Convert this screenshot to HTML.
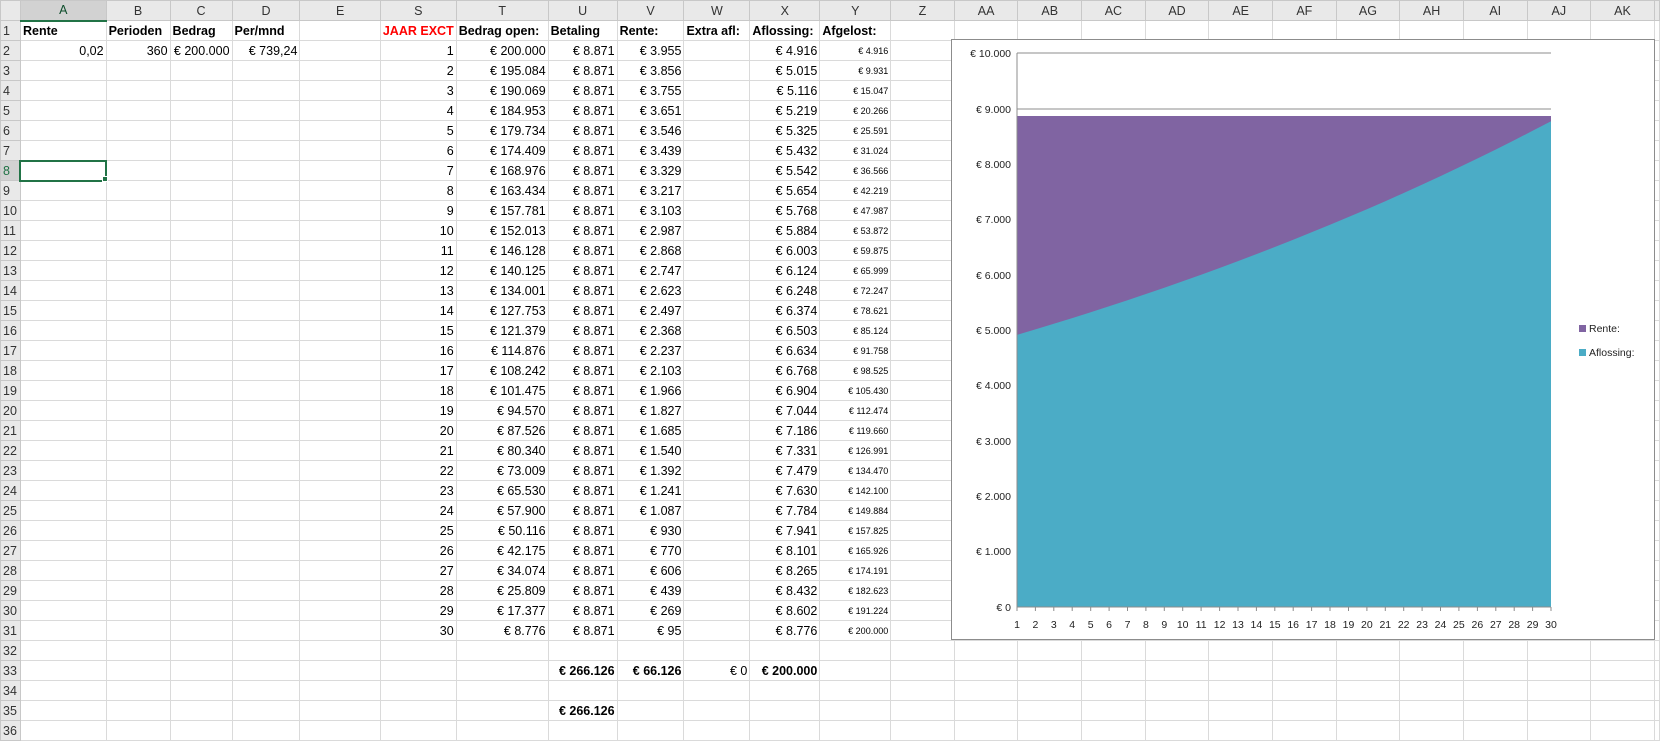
<!DOCTYPE html>
<html><head><meta charset="utf-8">
<style>
*{margin:0;padding:0;box-sizing:border-box}
body{width:1660px;height:726px;overflow:hidden;background:#fff;font-family:"Liberation Sans",sans-serif;font-size:12.5px;color:#000;position:relative}
table{border-collapse:collapse;table-layout:fixed;position:absolute;left:0;top:0}
td{height:20px;border:1px solid #dadada;padding:0 2px;white-space:nowrap;overflow:hidden;text-align:right;line-height:18px}
tr.h td{background:#e9e9e9;border-color:#c8c8c8;text-align:center;color:#333;font-size:12.5px}
td.rh{background:#e9e9e9;border-color:#c8c8c8;text-align:left;padding-left:2px;color:#333}
td.l{text-align:left}
b{font-weight:bold}
td.s{font-size:9px}
.sel{background:#d2d2d2 !important;border-bottom:2px solid #217346 !important;color:#0d4d2b !important}
.rsel{background:#d2d2d2 !important;color:#217346 !important;border-right:2px solid #217346 !important}
</style></head><body>
<table>
<colgroup><col style="width:20px"><col style="width:86px"><col style="width:64px"><col style="width:62px"><col style="width:68px"><col style="width:81px"><col style="width:71px"><col style="width:92px"><col style="width:69px"><col style="width:67px"><col style="width:66px"><col style="width:70px"><col style="width:71px"><col style="width:64px"><col style="width:64px"><col style="width:64px"><col style="width:64px"><col style="width:64px"><col style="width:64px"><col style="width:64px"><col style="width:64px"><col style="width:64px"><col style="width:64px"><col style="width:64px"><col style="width:64px"><col style="width:5px"></colgroup>
<tr class="h"><td></td><td class="sel">A</td><td>B</td><td>C</td><td>D</td><td>E</td><td>S</td><td>T</td><td>U</td><td>V</td><td>W</td><td>X</td><td>Y</td><td>Z</td><td>AA</td><td>AB</td><td>AC</td><td>AD</td><td>AE</td><td>AF</td><td>AG</td><td>AH</td><td>AI</td><td>AJ</td><td>AK</td><td></td></tr>
<tr><td class="rh">1</td><td class="l"><b>Rente</b></td><td class="l"><b>Perioden</b></td><td class="l"><b>Bedrag</b></td><td class="l"><b>Per/mnd</b></td><td></td><td class="l" style="color:#f00"><b>JAAR EXCT</b></td><td class="l"><b>Bedrag open:</b></td><td class="l"><b>Betaling</b></td><td class="l"><b>Rente:</b></td><td class="l"><b>Extra afl:</b></td><td class="l"><b>Aflossing:</b></td><td class="l"><b>Afgelost:</b></td><td></td><td></td><td></td><td></td><td></td><td></td><td></td><td></td><td></td><td></td><td></td><td></td><td></td></tr>
<tr><td class="rh">2</td><td>0,02</td><td>360</td><td>€ 200.000</td><td>€ 739,24</td><td></td><td>1</td><td>€ 200.000</td><td>€ 8.871</td><td>€ 3.955</td><td></td><td>€ 4.916</td><td class="s">€ 4.916</td><td></td><td></td><td></td><td></td><td></td><td></td><td></td><td></td><td></td><td></td><td></td><td></td><td></td></tr>
<tr><td class="rh">3</td><td></td><td></td><td></td><td></td><td></td><td>2</td><td>€ 195.084</td><td>€ 8.871</td><td>€ 3.856</td><td></td><td>€ 5.015</td><td class="s">€ 9.931</td><td></td><td></td><td></td><td></td><td></td><td></td><td></td><td></td><td></td><td></td><td></td><td></td><td></td></tr>
<tr><td class="rh">4</td><td></td><td></td><td></td><td></td><td></td><td>3</td><td>€ 190.069</td><td>€ 8.871</td><td>€ 3.755</td><td></td><td>€ 5.116</td><td class="s">€ 15.047</td><td></td><td></td><td></td><td></td><td></td><td></td><td></td><td></td><td></td><td></td><td></td><td></td><td></td></tr>
<tr><td class="rh">5</td><td></td><td></td><td></td><td></td><td></td><td>4</td><td>€ 184.953</td><td>€ 8.871</td><td>€ 3.651</td><td></td><td>€ 5.219</td><td class="s">€ 20.266</td><td></td><td></td><td></td><td></td><td></td><td></td><td></td><td></td><td></td><td></td><td></td><td></td><td></td></tr>
<tr><td class="rh">6</td><td></td><td></td><td></td><td></td><td></td><td>5</td><td>€ 179.734</td><td>€ 8.871</td><td>€ 3.546</td><td></td><td>€ 5.325</td><td class="s">€ 25.591</td><td></td><td></td><td></td><td></td><td></td><td></td><td></td><td></td><td></td><td></td><td></td><td></td><td></td></tr>
<tr><td class="rh">7</td><td></td><td></td><td></td><td></td><td></td><td>6</td><td>€ 174.409</td><td>€ 8.871</td><td>€ 3.439</td><td></td><td>€ 5.432</td><td class="s">€ 31.024</td><td></td><td></td><td></td><td></td><td></td><td></td><td></td><td></td><td></td><td></td><td></td><td></td><td></td></tr>
<tr><td class="rh rsel">8</td><td style="border:2px solid #217346"></td><td></td><td></td><td></td><td></td><td>7</td><td>€ 168.976</td><td>€ 8.871</td><td>€ 3.329</td><td></td><td>€ 5.542</td><td class="s">€ 36.566</td><td></td><td></td><td></td><td></td><td></td><td></td><td></td><td></td><td></td><td></td><td></td><td></td><td></td></tr>
<tr><td class="rh">9</td><td></td><td></td><td></td><td></td><td></td><td>8</td><td>€ 163.434</td><td>€ 8.871</td><td>€ 3.217</td><td></td><td>€ 5.654</td><td class="s">€ 42.219</td><td></td><td></td><td></td><td></td><td></td><td></td><td></td><td></td><td></td><td></td><td></td><td></td><td></td></tr>
<tr><td class="rh">10</td><td></td><td></td><td></td><td></td><td></td><td>9</td><td>€ 157.781</td><td>€ 8.871</td><td>€ 3.103</td><td></td><td>€ 5.768</td><td class="s">€ 47.987</td><td></td><td></td><td></td><td></td><td></td><td></td><td></td><td></td><td></td><td></td><td></td><td></td><td></td></tr>
<tr><td class="rh">11</td><td></td><td></td><td></td><td></td><td></td><td>10</td><td>€ 152.013</td><td>€ 8.871</td><td>€ 2.987</td><td></td><td>€ 5.884</td><td class="s">€ 53.872</td><td></td><td></td><td></td><td></td><td></td><td></td><td></td><td></td><td></td><td></td><td></td><td></td><td></td></tr>
<tr><td class="rh">12</td><td></td><td></td><td></td><td></td><td></td><td>11</td><td>€ 146.128</td><td>€ 8.871</td><td>€ 2.868</td><td></td><td>€ 6.003</td><td class="s">€ 59.875</td><td></td><td></td><td></td><td></td><td></td><td></td><td></td><td></td><td></td><td></td><td></td><td></td><td></td></tr>
<tr><td class="rh">13</td><td></td><td></td><td></td><td></td><td></td><td>12</td><td>€ 140.125</td><td>€ 8.871</td><td>€ 2.747</td><td></td><td>€ 6.124</td><td class="s">€ 65.999</td><td></td><td></td><td></td><td></td><td></td><td></td><td></td><td></td><td></td><td></td><td></td><td></td><td></td></tr>
<tr><td class="rh">14</td><td></td><td></td><td></td><td></td><td></td><td>13</td><td>€ 134.001</td><td>€ 8.871</td><td>€ 2.623</td><td></td><td>€ 6.248</td><td class="s">€ 72.247</td><td></td><td></td><td></td><td></td><td></td><td></td><td></td><td></td><td></td><td></td><td></td><td></td><td></td></tr>
<tr><td class="rh">15</td><td></td><td></td><td></td><td></td><td></td><td>14</td><td>€ 127.753</td><td>€ 8.871</td><td>€ 2.497</td><td></td><td>€ 6.374</td><td class="s">€ 78.621</td><td></td><td></td><td></td><td></td><td></td><td></td><td></td><td></td><td></td><td></td><td></td><td></td><td></td></tr>
<tr><td class="rh">16</td><td></td><td></td><td></td><td></td><td></td><td>15</td><td>€ 121.379</td><td>€ 8.871</td><td>€ 2.368</td><td></td><td>€ 6.503</td><td class="s">€ 85.124</td><td></td><td></td><td></td><td></td><td></td><td></td><td></td><td></td><td></td><td></td><td></td><td></td><td></td></tr>
<tr><td class="rh">17</td><td></td><td></td><td></td><td></td><td></td><td>16</td><td>€ 114.876</td><td>€ 8.871</td><td>€ 2.237</td><td></td><td>€ 6.634</td><td class="s">€ 91.758</td><td></td><td></td><td></td><td></td><td></td><td></td><td></td><td></td><td></td><td></td><td></td><td></td><td></td></tr>
<tr><td class="rh">18</td><td></td><td></td><td></td><td></td><td></td><td>17</td><td>€ 108.242</td><td>€ 8.871</td><td>€ 2.103</td><td></td><td>€ 6.768</td><td class="s">€ 98.525</td><td></td><td></td><td></td><td></td><td></td><td></td><td></td><td></td><td></td><td></td><td></td><td></td><td></td></tr>
<tr><td class="rh">19</td><td></td><td></td><td></td><td></td><td></td><td>18</td><td>€ 101.475</td><td>€ 8.871</td><td>€ 1.966</td><td></td><td>€ 6.904</td><td class="s">€ 105.430</td><td></td><td></td><td></td><td></td><td></td><td></td><td></td><td></td><td></td><td></td><td></td><td></td><td></td></tr>
<tr><td class="rh">20</td><td></td><td></td><td></td><td></td><td></td><td>19</td><td>€ 94.570</td><td>€ 8.871</td><td>€ 1.827</td><td></td><td>€ 7.044</td><td class="s">€ 112.474</td><td></td><td></td><td></td><td></td><td></td><td></td><td></td><td></td><td></td><td></td><td></td><td></td><td></td></tr>
<tr><td class="rh">21</td><td></td><td></td><td></td><td></td><td></td><td>20</td><td>€ 87.526</td><td>€ 8.871</td><td>€ 1.685</td><td></td><td>€ 7.186</td><td class="s">€ 119.660</td><td></td><td></td><td></td><td></td><td></td><td></td><td></td><td></td><td></td><td></td><td></td><td></td><td></td></tr>
<tr><td class="rh">22</td><td></td><td></td><td></td><td></td><td></td><td>21</td><td>€ 80.340</td><td>€ 8.871</td><td>€ 1.540</td><td></td><td>€ 7.331</td><td class="s">€ 126.991</td><td></td><td></td><td></td><td></td><td></td><td></td><td></td><td></td><td></td><td></td><td></td><td></td><td></td></tr>
<tr><td class="rh">23</td><td></td><td></td><td></td><td></td><td></td><td>22</td><td>€ 73.009</td><td>€ 8.871</td><td>€ 1.392</td><td></td><td>€ 7.479</td><td class="s">€ 134.470</td><td></td><td></td><td></td><td></td><td></td><td></td><td></td><td></td><td></td><td></td><td></td><td></td><td></td></tr>
<tr><td class="rh">24</td><td></td><td></td><td></td><td></td><td></td><td>23</td><td>€ 65.530</td><td>€ 8.871</td><td>€ 1.241</td><td></td><td>€ 7.630</td><td class="s">€ 142.100</td><td></td><td></td><td></td><td></td><td></td><td></td><td></td><td></td><td></td><td></td><td></td><td></td><td></td></tr>
<tr><td class="rh">25</td><td></td><td></td><td></td><td></td><td></td><td>24</td><td>€ 57.900</td><td>€ 8.871</td><td>€ 1.087</td><td></td><td>€ 7.784</td><td class="s">€ 149.884</td><td></td><td></td><td></td><td></td><td></td><td></td><td></td><td></td><td></td><td></td><td></td><td></td><td></td></tr>
<tr><td class="rh">26</td><td></td><td></td><td></td><td></td><td></td><td>25</td><td>€ 50.116</td><td>€ 8.871</td><td>€ 930</td><td></td><td>€ 7.941</td><td class="s">€ 157.825</td><td></td><td></td><td></td><td></td><td></td><td></td><td></td><td></td><td></td><td></td><td></td><td></td><td></td></tr>
<tr><td class="rh">27</td><td></td><td></td><td></td><td></td><td></td><td>26</td><td>€ 42.175</td><td>€ 8.871</td><td>€ 770</td><td></td><td>€ 8.101</td><td class="s">€ 165.926</td><td></td><td></td><td></td><td></td><td></td><td></td><td></td><td></td><td></td><td></td><td></td><td></td><td></td></tr>
<tr><td class="rh">28</td><td></td><td></td><td></td><td></td><td></td><td>27</td><td>€ 34.074</td><td>€ 8.871</td><td>€ 606</td><td></td><td>€ 8.265</td><td class="s">€ 174.191</td><td></td><td></td><td></td><td></td><td></td><td></td><td></td><td></td><td></td><td></td><td></td><td></td><td></td></tr>
<tr><td class="rh">29</td><td></td><td></td><td></td><td></td><td></td><td>28</td><td>€ 25.809</td><td>€ 8.871</td><td>€ 439</td><td></td><td>€ 8.432</td><td class="s">€ 182.623</td><td></td><td></td><td></td><td></td><td></td><td></td><td></td><td></td><td></td><td></td><td></td><td></td><td></td></tr>
<tr><td class="rh">30</td><td></td><td></td><td></td><td></td><td></td><td>29</td><td>€ 17.377</td><td>€ 8.871</td><td>€ 269</td><td></td><td>€ 8.602</td><td class="s">€ 191.224</td><td></td><td></td><td></td><td></td><td></td><td></td><td></td><td></td><td></td><td></td><td></td><td></td><td></td></tr>
<tr><td class="rh">31</td><td></td><td></td><td></td><td></td><td></td><td>30</td><td>€ 8.776</td><td>€ 8.871</td><td>€ 95</td><td></td><td>€ 8.776</td><td class="s">€ 200.000</td><td></td><td></td><td></td><td></td><td></td><td></td><td></td><td></td><td></td><td></td><td></td><td></td><td></td></tr>
<tr><td class="rh">32</td><td></td><td></td><td></td><td></td><td></td><td></td><td></td><td></td><td></td><td></td><td></td><td></td><td></td><td></td><td></td><td></td><td></td><td></td><td></td><td></td><td></td><td></td><td></td><td></td><td></td></tr>
<tr><td class="rh">33</td><td></td><td></td><td></td><td></td><td></td><td></td><td></td><td><b>€ 266.126</b></td><td><b>€ 66.126</b></td><td>€ 0</td><td><b>€ 200.000</b></td><td></td><td></td><td></td><td></td><td></td><td></td><td></td><td></td><td></td><td></td><td></td><td></td><td></td><td></td></tr>
<tr><td class="rh">34</td><td></td><td></td><td></td><td></td><td></td><td></td><td></td><td></td><td></td><td></td><td></td><td></td><td></td><td></td><td></td><td></td><td></td><td></td><td></td><td></td><td></td><td></td><td></td><td></td><td></td></tr>
<tr><td class="rh">35</td><td></td><td></td><td></td><td></td><td></td><td></td><td></td><td><b>€ 266.126</b></td><td></td><td></td><td></td><td></td><td></td><td></td><td></td><td></td><td></td><td></td><td></td><td></td><td></td><td></td><td></td><td></td><td></td></tr>
<tr><td class="rh">36</td><td></td><td></td><td></td><td></td><td></td><td></td><td></td><td></td><td></td><td></td><td></td><td></td><td></td><td></td><td></td><td></td><td></td><td></td><td></td><td></td><td></td><td></td><td></td><td></td><td></td></tr>
</table>
<div style="position:absolute;left:102px;top:176px;width:6px;height:6px;background:#217346;border:1px solid #fff"></div>
<svg style="position:absolute;left:951px;top:39px" width="705" height="601" viewBox="0 0 705 601" font-family="Liberation Sans, sans-serif" font-size="10.5">
<rect x="0.5" y="0.5" width="703" height="600" fill="#fff" stroke="#8c8c8c"/>
<line x1="66" y1="14" x2="600" y2="14" stroke="#8c8c8c"/>
<line x1="66" y1="70" x2="600" y2="70" stroke="#8c8c8c"/>
<rect x="66" y="77" width="534" height="491" fill="#8064a2"/>
<polygon fill="#4bacc6" points="66,295.9 84.4,290.4 102.8,284.8 121.2,279.1 139.7,273.2 158.1,267.3 176.5,261.2 194.9,255 213.3,248.7 231.7,242.3 250.1,235.7 268.6,229 287,222.1 305.4,215.1 323.8,208 342.2,200.7 360.6,193.3 379,185.8 397.5,178 415.9,170.2 434.3,162.2 452.7,154 471.1,145.6 489.5,137.1 507.9,128.4 526.4,119.5 544.8,110.5 563.2,101.2 581.6,91.8 600,82.2 600,568 66,568"/>
<line x1="66" y1="14" x2="66" y2="568" stroke="#8c8c8c"/>
<line x1="66" y1="568" x2="600" y2="568" stroke="#8c8c8c"/>
<g stroke="#8c8c8c">
<line x1="66" y1="568" x2="66" y2="572"/><line x1="84.4" y1="568" x2="84.4" y2="572"/><line x1="102.8" y1="568" x2="102.8" y2="572"/><line x1="121.2" y1="568" x2="121.2" y2="572"/><line x1="139.7" y1="568" x2="139.7" y2="572"/><line x1="158.1" y1="568" x2="158.1" y2="572"/><line x1="176.5" y1="568" x2="176.5" y2="572"/><line x1="194.9" y1="568" x2="194.9" y2="572"/><line x1="213.3" y1="568" x2="213.3" y2="572"/><line x1="231.7" y1="568" x2="231.7" y2="572"/><line x1="250.1" y1="568" x2="250.1" y2="572"/><line x1="268.6" y1="568" x2="268.6" y2="572"/><line x1="287" y1="568" x2="287" y2="572"/><line x1="305.4" y1="568" x2="305.4" y2="572"/><line x1="323.8" y1="568" x2="323.8" y2="572"/><line x1="342.2" y1="568" x2="342.2" y2="572"/><line x1="360.6" y1="568" x2="360.6" y2="572"/><line x1="379" y1="568" x2="379" y2="572"/><line x1="397.5" y1="568" x2="397.5" y2="572"/><line x1="415.9" y1="568" x2="415.9" y2="572"/><line x1="434.3" y1="568" x2="434.3" y2="572"/><line x1="452.7" y1="568" x2="452.7" y2="572"/><line x1="471.1" y1="568" x2="471.1" y2="572"/><line x1="489.5" y1="568" x2="489.5" y2="572"/><line x1="507.9" y1="568" x2="507.9" y2="572"/><line x1="526.4" y1="568" x2="526.4" y2="572"/><line x1="544.8" y1="568" x2="544.8" y2="572"/><line x1="563.2" y1="568" x2="563.2" y2="572"/><line x1="581.6" y1="568" x2="581.6" y2="572"/><line x1="600" y1="568" x2="600" y2="572"/>
</g>
<g text-anchor="end" fill="#222">
<text x="60" y="18">€ 10.000</text><text x="60" y="74">€ 9.000</text><text x="60" y="129">€ 8.000</text><text x="60" y="184">€ 7.000</text><text x="60" y="240">€ 6.000</text><text x="60" y="295">€ 5.000</text><text x="60" y="350">€ 4.000</text><text x="60" y="406">€ 3.000</text><text x="60" y="461">€ 2.000</text><text x="60" y="516">€ 1.000</text><text x="60" y="572">€ 0</text>
</g>
<g text-anchor="middle" fill="#222">
<text x="66" y="589">1</text><text x="84.4" y="589">2</text><text x="102.8" y="589">3</text><text x="121.2" y="589">4</text><text x="139.7" y="589">5</text><text x="158.1" y="589">6</text><text x="176.5" y="589">7</text><text x="194.9" y="589">8</text><text x="213.3" y="589">9</text><text x="231.7" y="589">10</text><text x="250.1" y="589">11</text><text x="268.6" y="589">12</text><text x="287" y="589">13</text><text x="305.4" y="589">14</text><text x="323.8" y="589">15</text><text x="342.2" y="589">16</text><text x="360.6" y="589">17</text><text x="379" y="589">18</text><text x="397.5" y="589">19</text><text x="415.9" y="589">20</text><text x="434.3" y="589">21</text><text x="452.7" y="589">22</text><text x="471.1" y="589">23</text><text x="489.5" y="589">24</text><text x="507.9" y="589">25</text><text x="526.4" y="589">26</text><text x="544.8" y="589">27</text><text x="563.2" y="589">28</text><text x="581.6" y="589">29</text><text x="600" y="589">30</text>
</g>
<rect x="628" y="286" width="7" height="7" fill="#8064a2"/>
<text x="638" y="293" fill="#222">Rente:</text>
<rect x="628" y="310" width="7" height="7" fill="#4bacc6"/>
<text x="638" y="317" fill="#222">Aflossing:</text>
</svg>
</body></html>
